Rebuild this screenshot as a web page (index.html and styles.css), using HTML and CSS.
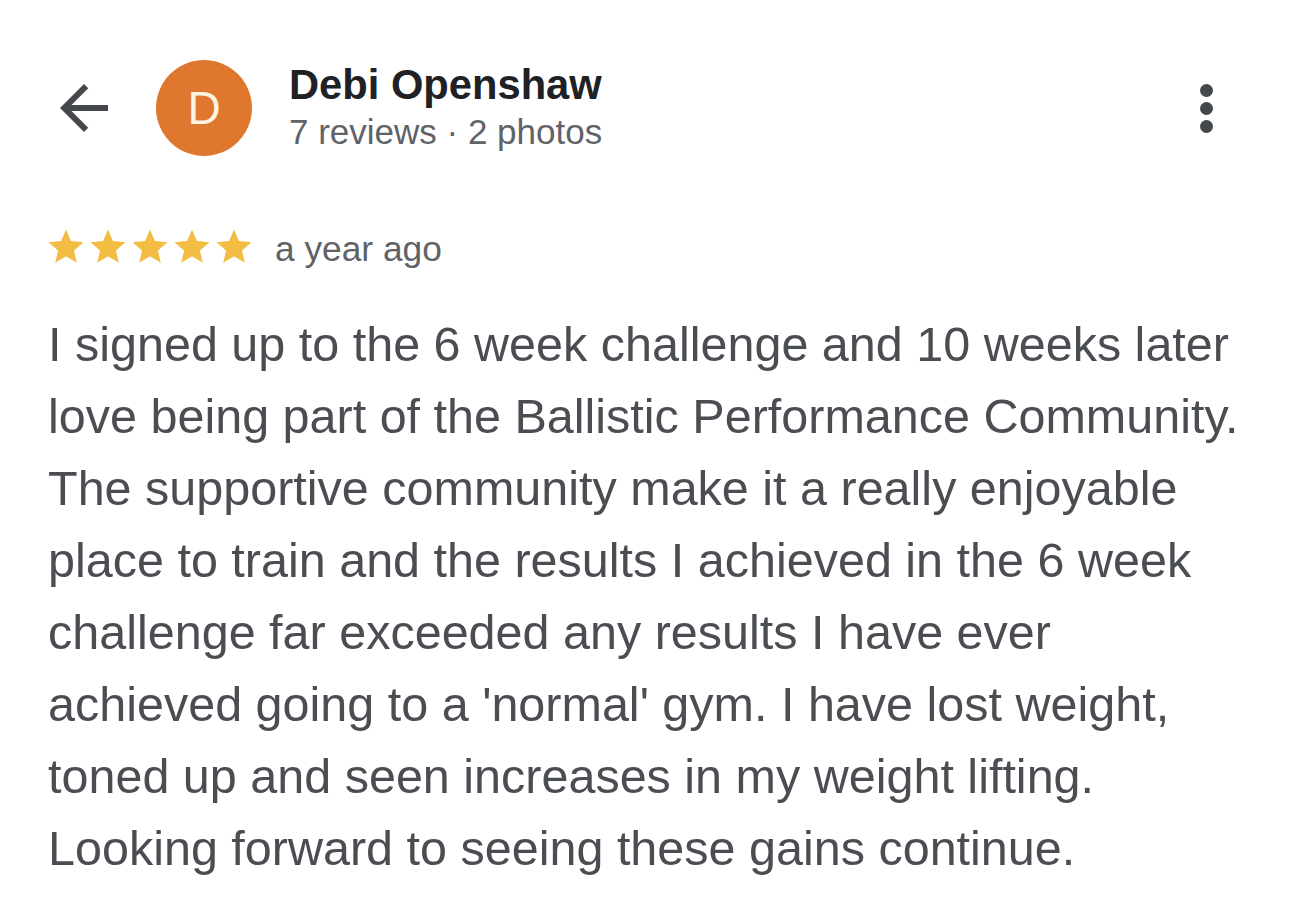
FILE: index.html
```html
<!DOCTYPE html>
<html lang="en">
<head>
<meta charset="utf-8">
<title>Review</title>
<link rel="stylesheet" href="styles.css">
</head>
<body>
<main class="review">
  <header class="head">
    <button class="back" aria-label="Back">
      <svg viewBox="0 0 24 24" width="72" height="72"><path d="M20 11H7.83l5.59-5.59L12 4l-8 8 8 8 1.41-1.41L7.83 13H20v-2z" fill="#44474c"/></svg>
    </button>
    <div class="avatar">D</div>
    <div class="who">
      <div class="name">Debi Openshaw</div>
      <div class="meta">7 reviews · 2 photos</div>
    </div>
    <button class="more" aria-label="More">
      <span class="dot"></span><span class="dot"></span><span class="dot"></span>
    </button>
  </header>
  <div class="rating">
    <div class="stars">
      <svg viewBox="0 0 24 24" width="42" height="42"><path d="M12 17.27L18.18 21l-1.64-7.03L22 9.24l-7.19-.61L12 2 9.19 8.63 2 9.24l5.46 4.73L5.82 21z"/></svg>
      <svg viewBox="0 0 24 24" width="42" height="42"><path d="M12 17.27L18.18 21l-1.64-7.03L22 9.24l-7.19-.61L12 2 9.19 8.63 2 9.24l5.46 4.73L5.82 21z"/></svg>
      <svg viewBox="0 0 24 24" width="42" height="42"><path d="M12 17.27L18.18 21l-1.64-7.03L22 9.24l-7.19-.61L12 2 9.19 8.63 2 9.24l5.46 4.73L5.82 21z"/></svg>
      <svg viewBox="0 0 24 24" width="42" height="42"><path d="M12 17.27L18.18 21l-1.64-7.03L22 9.24l-7.19-.61L12 2 9.19 8.63 2 9.24l5.46 4.73L5.82 21z"/></svg>
      <svg viewBox="0 0 24 24" width="42" height="42"><path d="M12 17.27L18.18 21l-1.64-7.03L22 9.24l-7.19-.61L12 2 9.19 8.63 2 9.24l5.46 4.73L5.82 21z"/></svg>
    </div>
    <span class="when">a year ago</span>
  </div>
  <p class="text">I signed up to the 6 week challenge and 10 weeks later<br>love being part of the Ballistic Performance Community.<br>The supportive community make it a really enjoyable<br>place to train and the results I achieved in the 6 week<br>challenge far exceeded any results I have ever<br>achieved going to a 'normal' gym. I have lost weight,<br>toned up and seen increases in my weight lifting.<br>Looking forward to seeing these gains continue.</p>
</main>
</body>
</html>
```
FILE: styles.css
```css
html, body {
  margin: 0;
  padding: 0;
  background: #ffffff;
}
body {
  font-family: "Liberation Sans", Arial, sans-serif;
  color: #4a4d52;
}
.review {
  padding: 60px 0 0 48px;
}
.head {
  display: flex;
  align-items: center;
}
.back {
  border: 0;
  background: none;
  padding: 0;
  width: 72px;
  height: 72px;
  margin-right: 36px;
  display: flex;
}
.avatar {
  width: 96px;
  height: 96px;
  border-radius: 50%;
  background: #e0772f;
  color: #fdf3e3;
  font-size: 46px;
  display: flex;
  align-items: center;
  justify-content: center;
  flex-shrink: 0;
}
.who {
  margin-left: 37px;
  flex: 1;
  align-self: flex-start;
  margin-top: 1px;
}
.name {
  font-weight: bold;
  font-size: 41.7px;
  line-height: 48px;
  color: #202124;
}
.meta {
  font-size: 35px;
  line-height: 40px;
  margin-top: 3px;
  color: #5f6368;
}
.more {
  border: 0;
  background: none;
  padding: 0;
  width: 14px;
  display: flex;
  flex-direction: column;
  gap: 5px;
  margin-right: 76px;
}
.dot {
  width: 13px;
  height: 13px;
  border-radius: 50%;
  background: #44474c;
}
.rating {
  display: flex;
  align-items: center;
  margin-top: 69px;
}
.stars {
  display: flex;
  margin-left: -3px;
}
.stars svg {
  fill: #f2bd42;
}
.when {
  margin-left: 20px;
  margin-top: 4px;
  font-size: 35.3px;
  color: #5f6368;
}
.text {
  margin: 39px 0 0;
  font-size: 48.5px;
  line-height: 72px;
  color: #4a4d52;
  white-space: nowrap;
}
```
